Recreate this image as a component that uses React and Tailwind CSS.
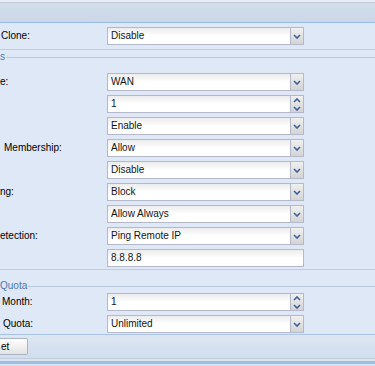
import React from 'react';

// Trigger button for combo boxes
function Chevron({ up = false, className = '' }) {
  return (
    <svg width="8" height="5" viewBox="0 0 8 5" className={className}>
      <path
        d={up ? 'M1 4 L4 1 L7 4' : 'M1 1 L4 4 L7 1'}
        fill="none"
        stroke="#3d5f9a"
        strokeWidth="1.6"
      />
    </svg>
  );
}

function Field({ value, kind = 'select' }) {
  return (
    <div className="flex h-[18px] w-[197px]">
      <div className="flex-1 flex items-center pl-[3px] border border-[#b5b8c8] bg-gradient-to-b from-[#ececec] via-white to-white text-[#141414]">
        {value}
      </div>
      {kind === 'select' && (
        <div className="w-[13px] flex items-center justify-center border border-l-0 border-[#b5b8c8] bg-gradient-to-b from-[#f0f0f0] to-[#d4d4d4]">
          <Chevron />
        </div>
      )}
      {kind === 'spin' && (
        <div className="w-[13px] flex flex-col items-center justify-around border border-l-0 border-[#b5b8c8] bg-gradient-to-b from-[#f0f0f0] to-[#d4d4d4]">
          <Chevron up />
          <Chevron />
        </div>
      )}
    </div>
  );
}

function Row({ label, pad = 0, children }) {
  return (
    <div className="flex items-center h-[18px]">
      <div className="w-[107px] text-black whitespace-nowrap" style={{ paddingLeft: pad }}>
        {label}
      </div>
      {children}
    </div>
  );
}

function Legend({ text, lineFrom }) {
  return (
    <div className="flex items-center h-[12px]">
      <span className="text-[#4b78b3] whitespace-nowrap" style={{ width: lineFrom }}>{text}</span>
      <div className="flex-1 h-px bg-[#b9c8dc]" />
    </div>
  );
}

export default function App() {
  const wanRows = [
    { label: 'e:', pad: 0, value: 'WAN', kind: 'select' },
    { label: '', pad: 0, value: '1', kind: 'spin' },
    { label: '', pad: 0, value: 'Enable', kind: 'select' },
    { label: 'Membership:', pad: 4, value: 'Allow', kind: 'select' },
    { label: '', pad: 0, value: 'Disable', kind: 'select' },
    { label: 'ng:', pad: 0, value: 'Block', kind: 'select' },
    { label: '', pad: 0, value: 'Allow Always', kind: 'select' },
    { label: 'etection:', pad: 0, value: 'Ping Remote IP', kind: 'select' },
    { label: '', pad: 0, value: '8.8.8.8', kind: 'text' },
  ];

  return (
    <div
      className="w-[375px] h-[366px] overflow-hidden bg-[#dfe8f6] text-[10px] leading-none"
      style={{ fontFamily: '"Liberation Sans", Arial, sans-serif' }}
    >
      {/* panel header */}
      <div className="h-[2px] bg-[#e6edf6]" />
      <div className="h-px bg-[#c3ccd8]" />
      <div className="h-[19px] bg-gradient-to-b from-[#d3ddea] to-[#cbd8e9]" />
      <div className="h-px bg-[#99bbe8]" />

      {/* MAC clone */}
      <div className="pt-[4px] pb-[4px]">
        <Row label="Clone:" pad={1}>
          <Field value="Disable" />
        </Row>
      </div>
      <div className="h-px bg-[#c3cdd9]" />

      {/* WAN settings */}
      <div className="pt-px">
        <Legend text="s" lineFrom={6} />
        <div className="mt-[10px] flex flex-col gap-[4px]">
          {wanRows.map((r, i) => (
            <Row key={i} label={r.label} pad={r.pad}>
              <Field value={r.value} kind={r.kind} />
            </Row>
          ))}
        </div>
      </div>
      <div className="mt-[2px] h-px bg-[#c3cdd9]" />

      {/* Data quota */}
      <div className="mt-[10px]">
        <Legend text="Quota" lineFrom={28} />
        <div className="mt-px flex flex-col gap-[4px]">
          <Row label="Month:" pad={2}>
            <Field value="1" kind="spin" />
          </Row>
          <Row label="Quota:" pad={3}>
            <Field value="Unlimited" />
          </Row>
        </div>
      </div>
      <div className="mt-px h-px bg-[#a9c3e6]" />

      {/* toolbar */}
      <div className="h-[23px] flex items-center bg-gradient-to-b from-[#dde7f4] to-[#d2deee]">
        <button className="h-[17px] w-[28px] text-left pl-px text-black border border-l-0 border-[#a8b4c4] rounded-r-[2px] bg-gradient-to-b from-white to-[#e3e3e3]">
          et
        </button>
      </div>
      <div className="h-px bg-[#c2ccd8]" />
      <div className="h-[2px] bg-[#dbe5f2]" />
      <div className="h-[3px] bg-[#9fbee6]" />
      <div className="h-[3px] bg-[#d8e3f1]" />
    </div>
  );
}
